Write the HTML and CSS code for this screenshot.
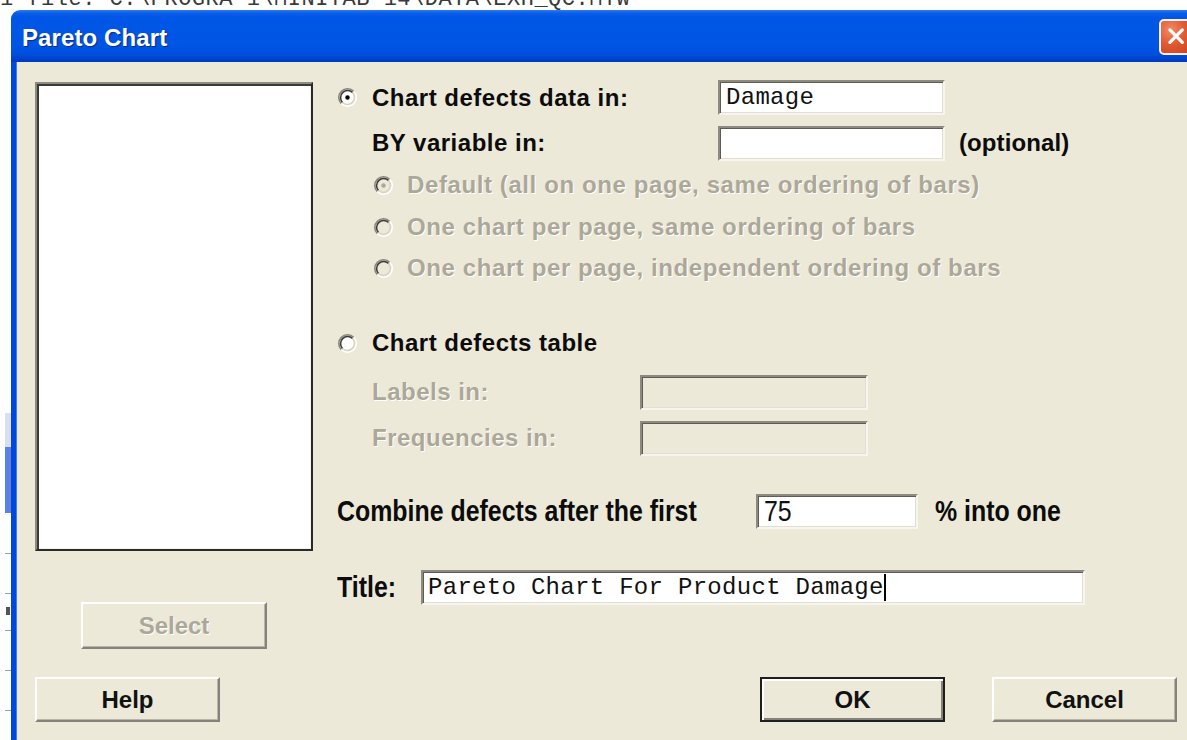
FILE: index.html
```html
<!DOCTYPE html>
<html lang="en">
<head>
<meta charset="utf-8">
<title>Pareto Chart</title>
<link rel="stylesheet" href="styles.css">
</head>
<body>
<svg class="defs" width="0" height="0" aria-hidden="true">
  <defs>
    <!-- classic 3D radio ring: dark top-left, light bottom-right -->
    <symbol id="radio-frame" viewBox="0 0 12 12">
      <path d="M2.11 9.89 A5.5 5.5 0 0 1 9.89 2.11" fill="none" stroke="#8a887e" stroke-width="1"/>
      <path d="M9.89 2.11 A5.5 5.5 0 0 1 2.11 9.89" fill="none" stroke="#ffffff" stroke-width="1"/>
      <path d="M2.82 9.18 A4.5 4.5 0 0 1 9.18 2.82" fill="none" stroke="#3c3c3c" stroke-width="1"/>
      <path d="M9.18 2.82 A4.5 4.5 0 0 1 2.82 9.18" fill="none" stroke="#d8d4c6" stroke-width="1"/>
    </symbol>
  </defs>
</svg>

<div class="desk-line"><span>1 file: C:\PROGRA~1\MINITAB 14\DATA\EXH_QC.MTW</span></div>

<div class="stage">
  <div class="desk-edge"></div>

  <div class="window">
    <div class="titlebar">
      <span class="title">Pareto Chart</span>
      <span class="close">
        <svg viewBox="0 0 36 36" width="32" height="32">
          <path d="M10 10 L24 24 M24 10 L10 24" stroke="#fff" stroke-width="3.6" stroke-linecap="round"/>
        </svg>
      </span>
    </div>

    <div class="client">
      <div class="left-col">
        <div class="listbox"></div>
        <div class="btn btn-select disabled">Select</div>
        <div class="btn btn-help">Help</div>
      </div>

      <div class="right-col">
        <div class="row row-data">
          <span class="lead"><svg class="radio" viewBox="0 0 12 12"><circle cx="6" cy="6" r="4.2" fill="#fff"/><use href="#radio-frame"/><circle cx="6" cy="6" r="1.4" fill="#000"/></svg></span>
          <span class="label label-main">Chart defects data in:</span>
          <span class="field field-var"><span class="mono">Damage</span></span>
        </div>

        <div class="row row-by">
          <span class="lead"></span>
          <span class="label label-main">BY variable in:</span>
          <span class="field field-var"></span>
          <span class="label suffix-opt">(optional)</span>
        </div>

        <div class="row row-sub row-sub-first">
          <svg class="radio" viewBox="0 0 12 12"><circle cx="6" cy="6" r="4.2" fill="#ece9d8"/><use href="#radio-frame"/><circle cx="6" cy="6" r="1.4" fill="#aca899"/></svg>
          <span class="label disabled sub-label">Default (all on one page, same ordering of bars)</span>
        </div>
        <div class="row row-sub">
          <svg class="radio" viewBox="0 0 12 12"><circle cx="6" cy="6" r="4.2" fill="#ece9d8"/><use href="#radio-frame"/></svg>
          <span class="label disabled sub-label">One chart per page, same ordering of bars</span>
        </div>
        <div class="row row-sub row-sub-last">
          <svg class="radio" viewBox="0 0 12 12"><circle cx="6" cy="6" r="4.2" fill="#ece9d8"/><use href="#radio-frame"/></svg>
          <span class="label disabled sub-label">One chart per page, independent ordering of bars</span>
        </div>

        <div class="row row-table">
          <span class="lead"><svg class="radio" viewBox="0 0 12 12"><circle cx="6" cy="6" r="4.2" fill="#fff"/><use href="#radio-frame"/></svg></span>
          <span class="label">Chart defects table</span>
        </div>

        <div class="row row-labels">
          <span class="lead"></span>
          <span class="label disabled label-table">Labels in:</span>
          <span class="field field-table disabled-field"></span>
        </div>
        <div class="row row-freq">
          <span class="lead"></span>
          <span class="label disabled label-table">Frequencies in:</span>
          <span class="field field-table disabled-field"></span>
        </div>

        <div class="row row-combine">
          <span class="cell-combine"><span class="label narrow">Combine defects after the first</span></span>
          <span class="field field-pct"><span class="narrow-value">75</span></span>
          <span class="cell-suffix"><span class="label narrow">% into one</span></span>
        </div>

        <div class="row row-title">
          <span class="cell-title"><span class="label narrow">Title:</span></span>
          <span class="field field-title"><span class="mono">Pareto Chart For Product Damage</span><span class="caret"></span></span>
        </div>

        <div class="actions">
          <div class="btn btn-default">OK</div>
          <div class="btn btn-cancel">Cancel</div>
        </div>
      </div>
    </div>
  </div>
</div>
</body>
</html>
```

FILE: styles.css
```css
html, body {
  margin: 0;
  padding: 0;
}

body {
  width: 1187px;
  height: 740px;
  overflow: hidden;
  background: #ffffff;
  font-family: "Liberation Sans", Arial, sans-serif;
  color: #000;
}

.defs {
  position: absolute;
  width: 0;
  height: 0;
}

/* worksheet text peeking above the dialog */
.desk-line {
  height: 10px;
  overflow: hidden;
}

.desk-line span {
  display: block;
  margin-top: -12px;
  font: 22px/24px "Liberation Mono", monospace;
  color: #3a3a3a;
  white-space: nowrap;
  letter-spacing: 0.5px;
}

.stage {
  display: flex;
  height: 730px;
}

/* strip of the application window behind the dialog */
.desk-edge {
  flex: none;
  width: 11px;
  background:
    linear-gradient(#d9def0, #d9def0) 5px 403px / 6px 34px no-repeat,
    linear-gradient(#5b82dc, #5b82dc) 5px 437px / 6px 66px no-repeat,
    linear-gradient(#9c9c9c, #9c9c9c) 5px 543px / 6px 1px no-repeat,
    linear-gradient(#9c9c9c, #9c9c9c) 5px 583px / 6px 1px no-repeat,
    linear-gradient(#555, #555) 6px 597px / 4px 8px no-repeat,
    linear-gradient(#9c9c9c, #9c9c9c) 5px 620px / 6px 1px no-repeat,
    linear-gradient(#9c9c9c, #9c9c9c) 5px 660px / 6px 1px no-repeat,
    linear-gradient(#9c9c9c, #9c9c9c) 5px 700px / 6px 1px no-repeat,
    #ffffff;
}

.window {
  flex: none;
  width: 1192px;
  display: flex;
  flex-direction: column;
}

.titlebar {
  flex: none;
  height: 52px;
  box-sizing: border-box;
  border-radius: 9px 9px 0 0;
  display: flex;
  align-items: center;
  padding: 4px 0 0 11px;
  background: linear-gradient(
    #2f7df2 0px,
    #0a5ee9 3px,
    #0056e6 7px,
    #0055e4 36px,
    #004fdc 44px,
    #0045cf 48px,
    #0039bb 52px
  );
}

.title {
  font: bold 24px "Liberation Sans", Arial, sans-serif;
  color: #ffffff;
  text-shadow: 1px 1px 1px #0a2a8a;
  letter-spacing: 0.1px;
}

.close {
  margin-left: auto;
  margin-right: 8px;
  margin-top: -2px;
  width: 36px;
  height: 36px;
  box-sizing: border-box;
  border: 2px solid #f4f2ee;
  border-radius: 5px;
  display: flex;
  align-items: center;
  justify-content: center;
  background: radial-gradient(circle at 30% 28%, #f08c67 0%, #e05a32 45%, #c9401c 100%);
}

.close svg {
  display: block;
}

.client {
  flex: 1;
  display: flex;
  gap: 24px;
  padding-left: 19px;
  background: #ece9d8;
  border-left: 5px solid #0047df;
  box-shadow: inset 1px 0 0 #3c7df0;
}

/* left column: variable list and its buttons */
.left-col {
  flex: none;
  width: 278px;
  display: flex;
  flex-direction: column;
  padding-top: 20px;
}

.listbox {
  height: 469px;
  box-sizing: border-box;
  background: #ffffff;
  border: 2px solid;
  border-color: #8d8b80 #2a2a2a #2a2a2a #8d8b80;
  box-shadow: inset 2px 2px 0 #3a3a3a, inset -1px -1px 0 #f4f2ea;
}

.btn {
  box-sizing: border-box;
  display: flex;
  align-items: center;
  justify-content: center;
  background: #ece9d8;
  border: 2px solid;
  border-color: #ffffff #84827a #84827a #ffffff;
  box-shadow: inset -1px -1px 0 #b9b6a8;
  font: bold 24px "Liberation Sans", Arial, sans-serif;
  color: #111;
}

.btn.disabled {
  color: #aca899;
  text-shadow: 1px 1px 0 #ffffff;
}

.btn-select {
  margin: 51px 0 0 46px;
  width: 186px;
  height: 47px;
}

.btn-help {
  margin-top: 28px;
  width: 185px;
  height: 45px;
}

/* right column: options */
.right-col {
  flex: none;
  display: flex;
  flex-direction: column;
  padding-top: 18px;
}

.row {
  display: flex;
  align-items: center;
  height: 34px;
}

.row-data { height: 35px; }
.row-by { margin-top: 11px; }
.row-sub-first { margin-top: 8px; }
.row-sub { margin-top: 8px; padding-left: 37px; }
.row-sub-last { margin-top: 7px; }
.row-table { margin-top: 41px; }
.row-labels { margin-top: 15px; }
.row-freq { margin-top: 12px; }
.row-combine { margin-top: 39px; }
.row-title { margin-top: 42px; }

.lead {
  flex: none;
  width: 35px;
  display: flex;
  align-items: center;
}

.radio {
  flex: none;
  display: block;
  width: 19px;
  height: 19px;
  margin-left: 1px;
}

.row-sub .radio {
  margin-left: 0;
}

.label {
  flex: none;
  font: bold 24px "Liberation Sans", Arial, sans-serif;
  white-space: nowrap;
  color: #0c0c0c;
  letter-spacing: 0.5px;
}

.label.disabled {
  color: #aca899;
  text-shadow: 1px 1px 0 #ffffff;
}

.sub-label {
  margin-left: 14px;
  letter-spacing: 0.6px;
}

.label-main { width: 346px; }
.label-table { width: 268px; }

.suffix-opt {
  margin-left: 14px;
  letter-spacing: 0.1px;
}

/* condensed labels of the lower rows */
.cell-combine,
.cell-title,
.cell-suffix {
  flex: none;
  display: flex;
  align-items: center;
}

.cell-combine { width: 419px; }
.cell-title { width: 84px; }
.cell-suffix { margin-left: 17px; }

.narrow {
  display: inline-block;
  font-size: 30px;
  letter-spacing: 0;
  transform: scaleX(0.83);
  transform-origin: left center;
}

.field {
  flex: none;
  display: flex;
  align-items: center;
  box-sizing: border-box;
  height: 35px;
  background: #ffffff;
  border: 2px solid;
  border-color: #8d8b80 #f6f5ef #f6f5ef #8d8b80;
  box-shadow: inset 1px 1px 0 #5e5c54, inset -1px -1px 0 #e2dfd2;
  padding-left: 6px;
  overflow: hidden;
}

.disabled-field {
  background: #ece9d8;
}

.field-var { width: 227px; }
.field-table { width: 228px; }
.field-pct { width: 162px; }
.field-title { width: 664px; padding-left: 5px; }

.mono {
  font: 24px "Liberation Mono", "Courier New", monospace;
  color: #111;
  letter-spacing: 0.3px;
  white-space: pre;
}

.narrow-value {
  display: inline-block;
  font: 30px "Liberation Sans", Arial, sans-serif;
  color: #111;
  transform: scaleX(0.83);
  transform-origin: left center;
}

.caret {
  flex: none;
  width: 2px;
  height: 27px;
  background: #000;
}

.actions {
  display: flex;
  gap: 47px;
  margin-top: 73px;
  padding-left: 423px;
}

.actions .btn {
  width: 185px;
  height: 45px;
}

.btn-default {
  border: 2px solid #1e1e1e;
  box-shadow: inset 2px 2px 0 #ffffff, inset -2px -2px 0 #84827a;
}
```
